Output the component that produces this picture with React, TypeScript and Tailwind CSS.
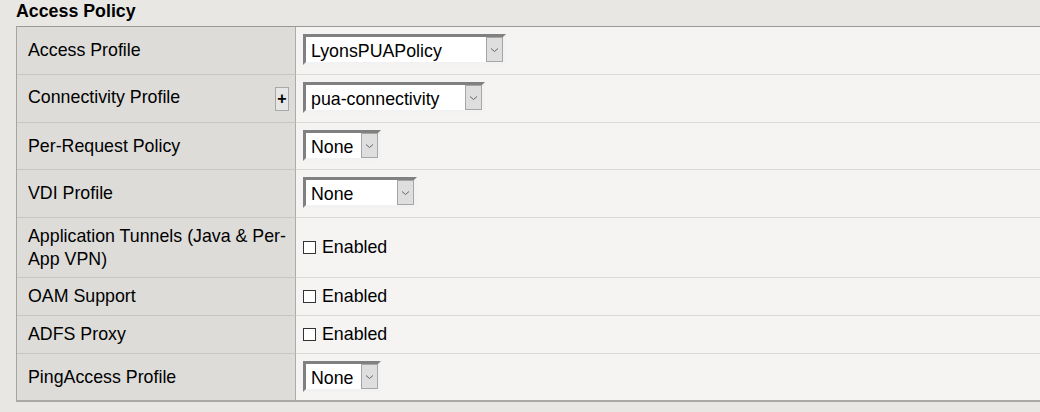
import React from "react";

function Chevron() {
  return (
    <svg width="9" height="6" viewBox="0 0 9 6">
      <path d="M1 1.5 L4.5 4.5 L8 1.5" stroke="#666" strokeWidth="1" fill="none" />
    </svg>
  );
}

function Sel({ value, w }: { value: string; w: string }) {
  return (
    <div
      className={
        "flex h-[31px] border-[3px] border-t-[#808080] border-l-[#808080] border-r-[#f2f2f2] border-b-[#f2f2f2] bg-white " +
        w
      }
    >
      <span className="flex-1 pl-[5px] pt-[3px] leading-[22px] text-black whitespace-nowrap overflow-hidden">{value}</span>
      <span className="w-[17px] h-[25px] border border-[#a6a6a6] bg-[#dedede] flex items-center justify-center">
        <Chevron />
      </span>
    </div>
  );
}

function Check() {
  return (
    <div className="flex items-center">
      <span className="w-[13px] h-[13px] border border-[#333] bg-white" />
      <span className="ml-[6px] text-black">Enabled</span>
    </div>
  );
}

type Row = {
  label: string;
  h: string;
  plus?: boolean;
  sel?: { value: string; w: string };
  check?: boolean;
  last?: boolean;
};

const rows: Row[] = [
  { label: "Access Profile", h: "h-[48px]", sel: { value: "LyonsPUAPolicy", w: "w-[203px]" } },
  { label: "Connectivity Profile", h: "h-[48px]", plus: true, sel: { value: "pua-connectivity", w: "w-[182px]" } },
  { label: "Per-Request Policy", h: "h-[47px]", sel: { value: "None", w: "w-[78px]" } },
  { label: "VDI Profile", h: "h-[48px]", sel: { value: "None", w: "w-[114px]" } },
  { label: "Application Tunnels (Java & Per-App VPN)", h: "h-[60px]", check: true },
  { label: "OAM Support", h: "h-[38px]", check: true },
  { label: "ADFS Proxy", h: "h-[38px]", check: true },
  { label: "PingAccess Profile", h: "h-[46px]", sel: { value: "None", w: "w-[78px]" }, last: true },
];

export default function App() {
  return (
    <div className="w-[1040px] h-[412px] bg-[#e8e7e3] overflow-hidden font-['Liberation_Sans',Arial,sans-serif] text-[17.8px] text-black">
      <div className="pl-4 pt-[1px] font-bold leading-[20px]">Access Policy</div>
      <div className="ml-4 mt-[5px] border-t border-t-[#999997] border-l border-l-[#a5a5a3] border-b-2 border-b-[#a9a9a7]">
        {rows.map((r) => (
          <div key={r.label} className={"flex " + r.h}>
            <div
              className={
                "w-[279px] shrink-0 bg-[#dddcd9] border-r border-r-[#ababa9] flex items-center justify-between pl-[11px] " +
                (r.plus ? "pr-[6px] pb-[3px] " : "pr-[1px] ") +
                (r.last ? "" : "border-b border-b-[#c6c6c4]")
              }
            >
              <span className="leading-[23px]">{r.label}</span>
              {r.plus && (
                <span className="w-[14px] h-[24px] shrink-0 mt-[3px] border border-[#a8a8a8] bg-[#e6e6e6] flex items-center justify-center text-[16px] font-bold leading-none">
                  +
                </span>
              )}
            </div>
            <div
              className={
                "flex-1 bg-[#f5f4f2] pl-[7px] flex " +
                (r.sel ? "items-start pt-[7px] " : "items-center ") +
                (r.last ? "" : "border-b border-b-[#dad9d7]")
              }
            >
              {r.sel && <Sel value={r.sel.value} w={r.sel.w} />}
              {r.check && <Check />}
            </div>
          </div>
        ))}
      </div>
    </div>
  );
}
